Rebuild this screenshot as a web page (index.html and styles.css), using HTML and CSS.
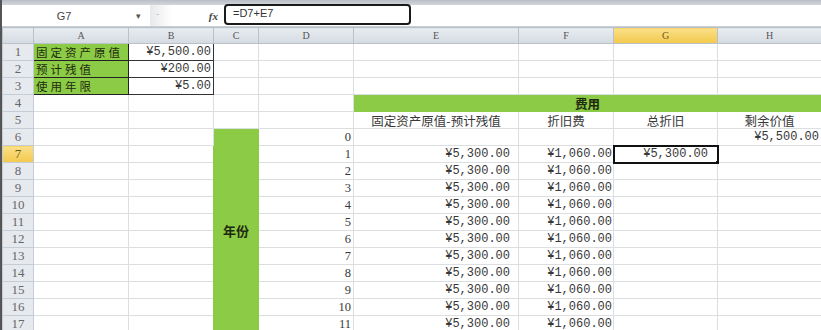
FILE: index.html
```html
<!DOCTYPE html>
<html lang="zh-CN">
<head>
    <meta charset="UTF-8">
    <title>折旧计算表</title>
    <link rel="stylesheet" href="styles.css">
</head>
<body>
    <!-- Formula bar -->
    <div class="top-strip"></div>
    <div class="formula-bar">
        <div class="name-box"><span class="cell-ref">G7</span><span class="drop">▾</span></div>
        <div class="fx-area"><span class="dash">-</span><span class="fx">fx</span></div>
        <div class="formula-input">=D7+E7</div>
    </div>

    <!-- Sheet -->
    <table class="sheet">
        <colgroup>
            <col class="c-hdr"><col class="c-a"><col class="c-b"><col class="c-c"><col class="c-d">
            <col class="c-e"><col class="c-f"><col class="c-g"><col class="c-h">
        </colgroup>
        <tr class="col-heads">
            <th class="corner"></th><th>A</th><th>B</th><th>C</th><th>D</th><th>E</th><th>F</th><th class="active">G</th><th>H</th>
        </tr>
        <tr><th class="rn">1</th><td class="label">固定资产原值</td><td class="val boxed top">¥5,500.00</td><td></td><td></td><td></td><td></td><td></td><td></td></tr>
        <tr><th class="rn">2</th><td class="label">预计残值</td><td class="val boxed">¥200.00</td><td></td><td></td><td></td><td></td><td></td><td></td></tr>
        <tr><th class="rn">3</th><td class="label">使用年限</td><td class="val boxed">¥5.00</td><td></td><td></td><td></td><td></td><td></td><td></td></tr>
        <tr><th class="rn">4</th><td></td><td></td><td></td><td></td><td class="band" colspan="4">费用</td></tr>
        <tr><th class="rn">5</th><td></td><td></td><td></td><td></td><td class="head">固定资产原值-预计残值</td><td class="head">折旧费</td><td class="head">总折旧</td><td class="head">剩余价值</td></tr>
        <tr><th class="rn">6</th><td></td><td></td><td class="year" rowspan="12">年份</td><td class="num">0</td><td></td><td></td><td></td><td class="val h-val">¥5,500.00</td></tr>
        <tr><th class="rn active">7</th><td></td><td></td><td class="num">1</td><td class="val e-val">¥5,300.00</td><td class="val f-val">¥1,060.00</td><td class="val g-val selected">¥5,300.00<span class="handle"></span></td><td></td></tr>
        <tr><th class="rn">8</th><td></td><td></td><td class="num">2</td><td class="val e-val">¥5,300.00</td><td class="val f-val">¥1,060.00</td><td></td><td></td></tr>
        <tr><th class="rn">9</th><td></td><td></td><td class="num">3</td><td class="val e-val">¥5,300.00</td><td class="val f-val">¥1,060.00</td><td></td><td></td></tr>
        <tr><th class="rn">10</th><td></td><td></td><td class="num">4</td><td class="val e-val">¥5,300.00</td><td class="val f-val">¥1,060.00</td><td></td><td></td></tr>
        <tr><th class="rn">11</th><td></td><td></td><td class="num">5</td><td class="val e-val">¥5,300.00</td><td class="val f-val">¥1,060.00</td><td></td><td></td></tr>
        <tr><th class="rn">12</th><td></td><td></td><td class="num">6</td><td class="val e-val">¥5,300.00</td><td class="val f-val">¥1,060.00</td><td></td><td></td></tr>
        <tr><th class="rn">13</th><td></td><td></td><td class="num">7</td><td class="val e-val">¥5,300.00</td><td class="val f-val">¥1,060.00</td><td></td><td></td></tr>
        <tr><th class="rn">14</th><td></td><td></td><td class="num">8</td><td class="val e-val">¥5,300.00</td><td class="val f-val">¥1,060.00</td><td></td><td></td></tr>
        <tr><th class="rn">15</th><td></td><td></td><td class="num">9</td><td class="val e-val">¥5,300.00</td><td class="val f-val">¥1,060.00</td><td></td><td></td></tr>
        <tr><th class="rn">16</th><td></td><td></td><td class="num">10</td><td class="val e-val">¥5,300.00</td><td class="val f-val">¥1,060.00</td><td></td><td></td></tr>
        <tr><th class="rn">17</th><td></td><td></td><td class="num">11</td><td class="val e-val">¥5,300.00</td><td class="val f-val">¥1,060.00</td><td></td><td></td></tr>
    </table>
</body>
</html>
```

FILE: styles.css
```css
* { margin: 0; padding: 0; box-sizing: border-box; }
body { width: 821px; height: 330px; overflow: hidden; background: #fff; font-family: "Noto Sans CJK SC", "Liberation Sans", sans-serif; color: #333; border-left: 2px solid #555; }

/* Formula bar */
.top-strip { height: 5px; background: linear-gradient(#b9bec6, #d3d7dc); }
.formula-bar { display: flex; align-items: center; height: 22px; background: #fff; border-bottom: 1px solid #c9ced5; }
.name-box { width: 148px; display: flex; align-items: center; height: 100%; }
.cell-ref { flex-grow: 1; text-align: center; font: 11px "Liberation Sans", sans-serif; color: #444; padding-right: 10px; }
.drop { width: 14px; font-size: 9px; color: #555; }
.fx-area { width: 74px; height: 100%; display: flex; align-items: center; justify-content: space-between; padding: 0 6px 0 6px; background: linear-gradient(90deg, #e7e9ec, #fff 30%, #fff); }
.dash { color: #bbb; font-size: 10px; margin-top: -6px; }
.fx { font: italic bold 11px "Liberation Serif", serif; color: #444; }
.formula-input { width: 187px; height: 21px; border: 2px solid #1a1a1a; border-radius: 4px; padding: 1px 7px; font: 11px "Liberation Sans", sans-serif; color: #333; margin-top: -2px; }

/* Sheet */
.sheet { border-collapse: collapse; table-layout: fixed; width: 819px; }
.c-hdr { width: 31px; } .c-a { width: 95px; } .c-b { width: 85px; } .c-c { width: 45px; } .c-d { width: 95px; }
.c-e { width: 165px; } .c-f { width: 95px; } .c-g { width: 104px; } .c-h { width: 104px; }
.sheet td { height: 17px; border: 1px solid #dcdfe2; font-size: 12.5px; line-height: 15px; white-space: nowrap; overflow: hidden; padding: 0 2px; color: #383838; }
.sheet th { font-weight: normal; }

.col-heads th { height: 16px; background: linear-gradient(#e8ecf1, #d5dbe2); border: 1px solid #b9c1cb; font: 10px "Liberation Serif", serif; color: #555; }
.col-heads th.active { background: linear-gradient(#fbe08a, #f3c94c); color: #6b5a20; }
.rn { background: #e6eaef; border: 1px solid #c5ccd4; font: 13px "Liberation Serif", serif; color: #666; text-align: center; height: 17px; }
.rn.active { background: linear-gradient(#fbe08a, #f3c94c); color: #6b5a20; }

.label { background: #8ccb45; border: 1px solid #222 !important; color: #1e2a10 !important; font-size: 11.5px !important; letter-spacing: 3px; }
.val { font-family: "Liberation Mono", monospace; font-size: 12px !important; text-align: right; color: #444; }
.boxed { border-right: 1px solid #333 !important; border-bottom: 1px solid #333 !important; }
.boxed.top { border-top: 1px solid #333 !important; }
.num { font: 13px "Liberation Serif", serif; text-align: right; color: #444; }
.e-val { padding-right: 8px !important; }
.f-val { padding-right: 1px !important; }
.g-val { padding-right: 9px !important; }
.h-val { padding-right: 2px !important; }

.band { background: #8ccb45; border-color: #8ccb45 !important; text-align: center; font-weight: bold; color: #1e2a10 !important; }
.head { text-align: center; }
.year { background: #8ccb45; border-color: #8ccb45 !important; text-align: center; vertical-align: middle; font-weight: bold; color: #1e2a10 !important; font-size: 13px !important; }

.selected { position: relative; outline: 2px solid #111; outline-offset: -1px; }
.handle { position: absolute; right: -3px; bottom: -3px; width: 5px; height: 5px; background: #111; border: 1px solid #fff; }
```
